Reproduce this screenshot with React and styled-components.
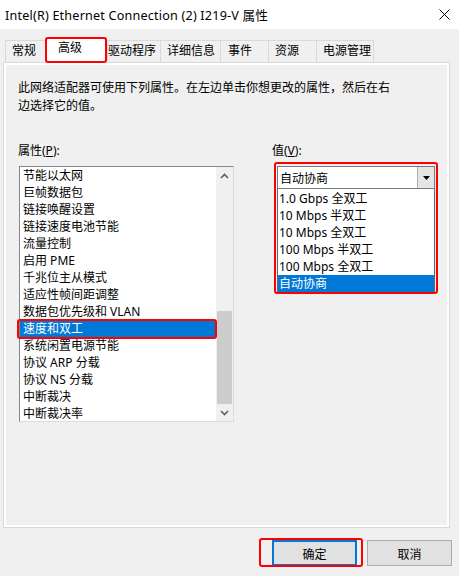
import React from "react";
import styled, { createGlobalStyle, css } from "styled-components";

const GlobalStyle = createGlobalStyle`
  html, body {
    margin: 0;
    padding: 0;
    background: #f0f0f0;
  }
  body {
    font-family: "Noto Sans", "Noto Sans CJK SC", sans-serif;
    font-size: 12px;
    color: #000;
  }
  * {
    box-sizing: border-box;
  }
`;

const redMark = css`
  position: relative;
  &::after {
    content: "";
    position: absolute;
    top: ${(p) => p.$mark[0]}px;
    right: ${(p) => p.$mark[1]}px;
    bottom: ${(p) => p.$mark[2]}px;
    left: ${(p) => p.$mark[3]}px;
    border: 2px solid #ff0000;
    border-radius: 3px;
    pointer-events: none;
    z-index: 5;
  }
`;

const Window = styled.div`
  width: 459px;
  height: 576px;
  background: #f0f0f0;
  overflow: hidden;
`;

const TitleBar = styled.div`
  height: 29px;
  background: #fff;
  display: flex;
  align-items: center;
  justify-content: space-between;
  padding: 0 9px 0 5px;
  font-size: 12.6px;
  letter-spacing: 0.2px;
`;

const Body = styled.div`
  padding: 8px 7px 0 3px;
`;

const TabStrip = styled.div`
  display: flex;
  align-items: flex-end;
  height: 25px;
  padding-left: 2px;
  position: relative;
  z-index: 2;
`;

const Tab = styled.div`
  width: ${(p) => p.$w}px;
  height: 22px;
  padding-left: ${(p) => p.$pad}px;
  line-height: 20px;
  white-space: nowrap;
  background: #f0f0f0;
  border-top: 1px solid #d9d9d9;
  border-left: 1px solid #d9d9d9;
  &:last-child {
    border-right: 1px solid #d9d9d9;
  }
  ${(p) =>
    p.$active &&
    css`
      height: 26px;
      margin-bottom: -1px;
      background: #fff;
      border-right: 1px solid #d9d9d9;
      ${redMark}
    `}
`;

const Panel = styled.div`
  height: 466px;
  margin-right: 2px;
  border: 1px solid #d9d9d9;
  box-shadow: inset 0 0 0 2px #fff;
  padding: 16px 14px 0 14px;
`;

const Description = styled.p`
  margin: 0 0 28px;
  line-height: 18px;
`;

const Columns = styled.div`
  display: grid;
  grid-template-columns: 254px 1fr;
`;

const Column = styled.div`
  display: flex;
  flex-direction: column;
  gap: 7px;
`;

const Label = styled.div`
  line-height: 16px;
  u {
    text-decoration: underline;
  }
`;

const ListBox = styled.div`
  width: 215px;
  height: 256px;
  margin-left: 1px;
  display: flex;
  background: #fff;
  border: 1px solid #828790;
  border-right-color: #dcdcdc;
  border-bottom-color: #dcdcdc;
`;

const Rows = styled.div`
  flex: 1;
  display: flex;
  flex-direction: column;
`;

const Row = styled.div`
  height: 17px;
  line-height: 18px;
  padding-left: ${(p) => p.$pad || 3}px;
  white-space: nowrap;
  ${(p) =>
    p.$selected &&
    css`
      background: #0078d7;
      color: #fff;
    `}
  ${(p) => p.$mark && redMark}
`;

const ScrollBar = styled.div`
  width: 17px;
  background: #f0f0f0;
  display: flex;
  flex-direction: column;
`;

const ScrollButton = styled.div`
  height: 17px;
  display: flex;
  align-items: center;
  justify-content: center;
`;

const Track = styled.div`
  flex: 1;
  display: flex;
  flex-direction: column;
  justify-content: flex-end;
`;

const Thumb = styled.div`
  height: 93px;
  margin: 0 1px;
  background: #cdcdcd;
`;

const ComboWrap = styled.div`
  width: 158px;
  margin-left: 5px;
  ${redMark}
`;

const Combo = styled.div`
  height: 23px;
  display: flex;
  align-items: center;
  background: #fff;
  border: 1px solid #7a7a7a;
  padding-left: 2px;
`;

const ComboText = styled.span`
  flex: 1;
`;

const DropButton = styled.div`
  width: 17px;
  height: 21px;
  display: flex;
  align-items: center;
  justify-content: center;
  background: #e5e5e5;
  border-left: 1px solid #adadad;
`;

const DropList = styled.div`
  background: #fff;
  border: 1px solid #646464;
  border-top: none;
  padding-top: 1px;
`;

const ButtonRow = styled.div`
  display: flex;
  justify-content: flex-end;
  gap: 10px;
  margin-top: 12px;
`;

const Button = styled.button`
  width: 85px;
  height: 26px;
  font-family: "Noto Sans CJK SC", sans-serif;
  font-size: 12px;
  color: #000;
  background: #e1e1e1;
  border: 1px solid #adadad;
  padding: 0;
  ${(p) =>
    p.$primary &&
    css`
      border: 2px solid #0078d7;
    `}
  ${(p) => p.$mark && redMark}
`;

const Chevron = ({ up }) => (
  <svg width="9" height="6" viewBox="0 0 9 6">
    <polyline
      points={up ? "1,5 4.5,1.5 8,5" : "1,1 4.5,4.5 8,1"}
      fill="none"
      stroke="#606060"
      strokeWidth="1.6"
    />
  </svg>
);

const properties = [
  "节能以太网",
  "巨帧数据包",
  "链接唤醒设置",
  "链接速度电池节能",
  "流量控制",
  "启用 PME",
  "千兆位主从模式",
  "适应性帧间距调整",
  "数据包优先级和 VLAN",
  "速度和双工",
  "系统闲置电源节能",
  "协议 ARP 分载",
  "协议 NS 分载",
  "中断裁决",
  "中断裁决率",
];

const values = [
  "1.0 Gbps 全双工",
  "10 Mbps 半双工",
  "10 Mbps 全双工",
  "100 Mbps 半双工",
  "100 Mbps 全双工",
  "自动协商",
];

const tabs = [
  { name: "常规", w: 40, pad: 6 },
  { name: "高级", w: 62, pad: 12, active: true },
  { name: "驱动程序", w: 53, pad: 0 },
  { name: "详细信息", w: 60, pad: 6 },
  { name: "事件", w: 48, pad: 7 },
  { name: "资源", w: 48, pad: 6 },
  { name: "电源管理", w: 58, pad: 6 },
];

export default function App() {
  return (
    <Window>
      <GlobalStyle />
      <TitleBar>
        <span>Intel(R) Ethernet Connection (2) I219-V 属性</span>
        <svg width="11" height="11" viewBox="0 0 11 11">
          <path d="M0.5 0.5 L10.5 10.5 M10.5 0.5 L0.5 10.5" stroke="#000" strokeWidth="1" />
        </svg>
      </TitleBar>
      <Body>
        <TabStrip>
          {tabs.map((t) => (
            <Tab
              key={t.name}
              $w={t.w}
              $pad={t.pad}
              $active={t.active}
              $mark={t.active ? [-1, -1, 0, -1] : undefined}
            >
              {t.name}
            </Tab>
          ))}
        </TabStrip>
        <Panel>
          <Description>
            此网络适配器可使用下列属性。在左边单击你想更改的属性，然后在右
            <br />
            边选择它的值。
          </Description>
          <Columns>
            <Column>
              <Label>
                属性(<u>P</u>):
              </Label>
              <ListBox>
                <Rows>
                  {properties.map((p) => (
                    <Row
                      key={p}
                      $selected={p === "速度和双工"}
                      $mark={p === "速度和双工" ? [-1, -1, -2, -3] : undefined}
                    >
                      {p}
                    </Row>
                  ))}
                </Rows>
                <ScrollBar>
                  <ScrollButton>
                    <Chevron up />
                  </ScrollButton>
                  <Track>
                    <Thumb />
                  </Track>
                  <ScrollButton>
                    <Chevron />
                  </ScrollButton>
                </ScrollBar>
              </ListBox>
            </Column>
            <Column>
              <Label>
                值(<u>V</u>):
              </Label>
              <ComboWrap $mark={[-4, -3, -1, -3]}>
                <Combo>
                  <ComboText>自动协商</ComboText>
                  <DropButton>
                    <svg width="7" height="4" viewBox="0 0 7 4">
                      <polygon points="0,0 7,0 3.5,4" fill="#000" />
                    </svg>
                  </DropButton>
                </Combo>
                <DropList>
                  {values.map((v) => (
                    <Row key={v} $pad={1} $selected={v === "自动协商"}>
                      {v}
                    </Row>
                  ))}
                </DropList>
              </ComboWrap>
            </Column>
          </Columns>
        </Panel>
        <ButtonRow>
          <Button $primary $mark={[-4, -8, -3, -15]}>
            确定
          </Button>
          <Button>取消</Button>
        </ButtonRow>
      </Body>
    </Window>
  );
}
